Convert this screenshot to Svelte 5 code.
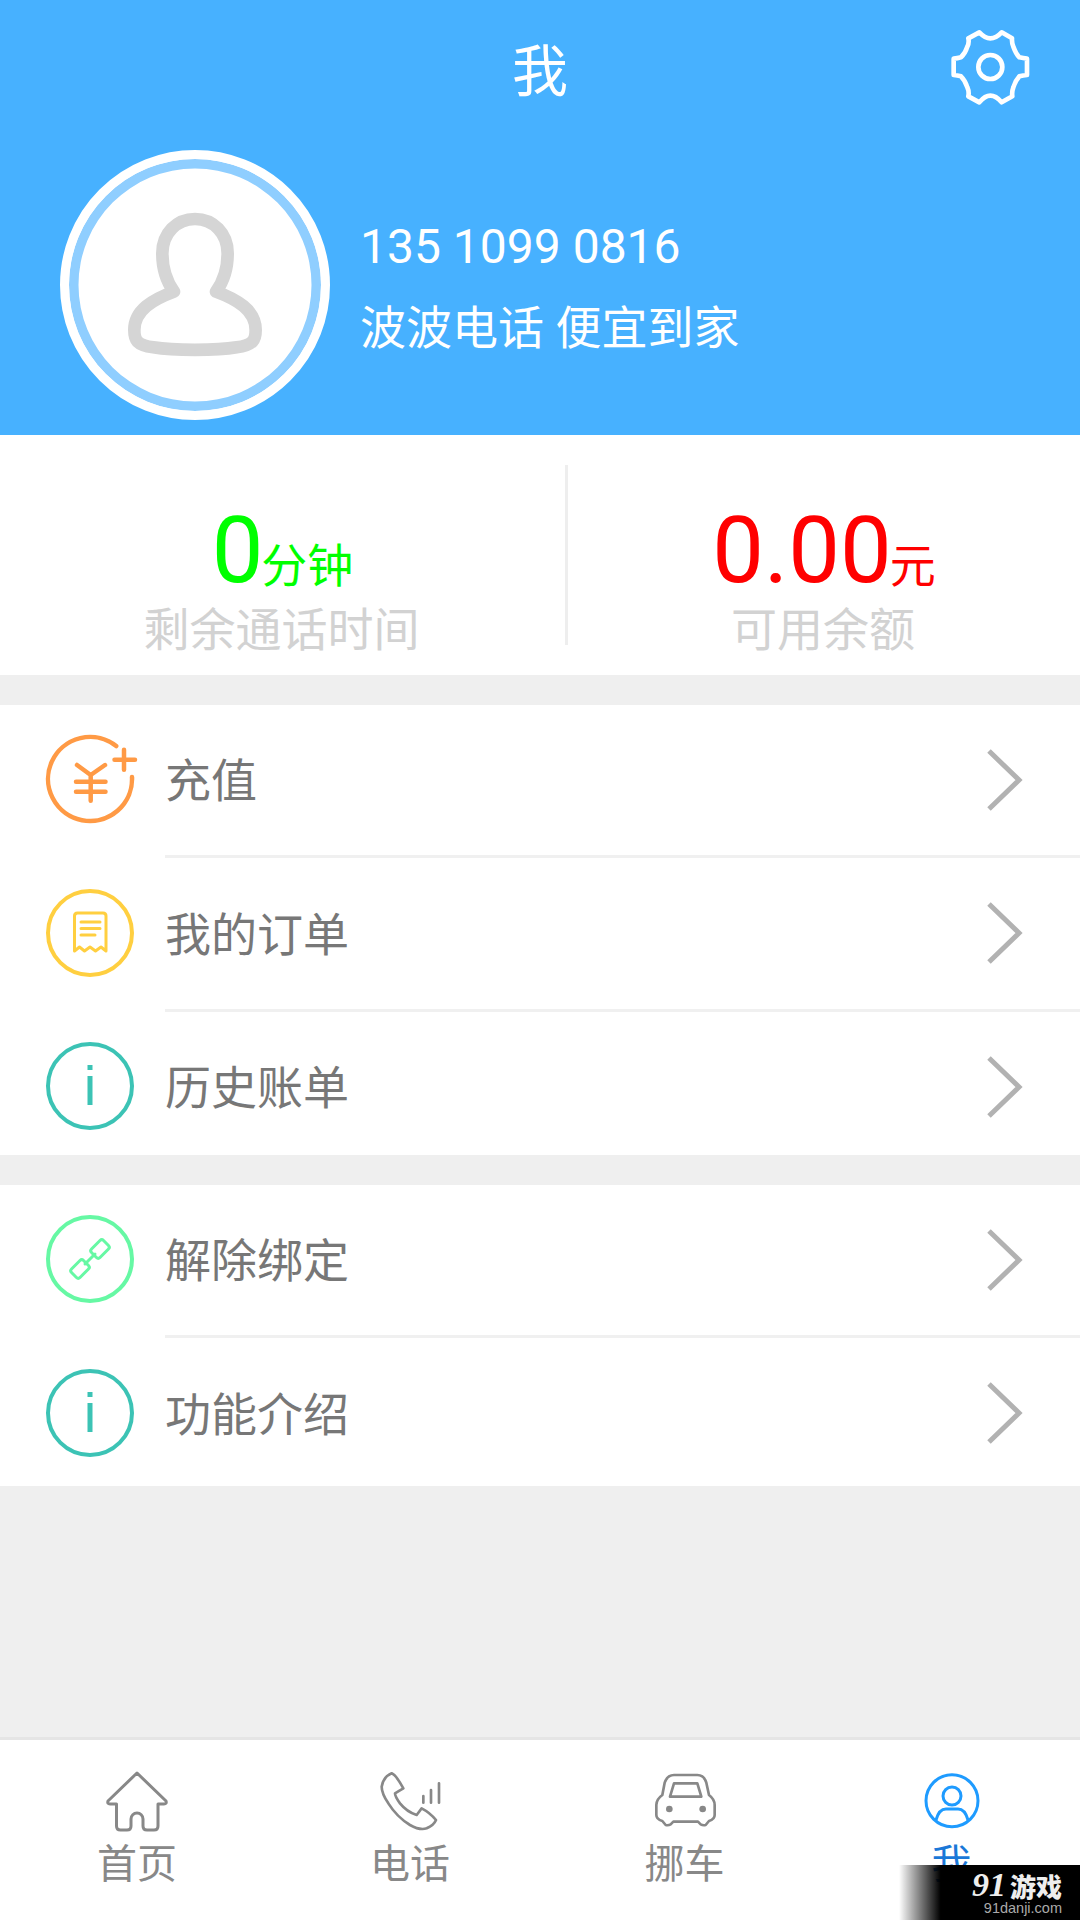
<script>
  const sections = [
    [
      { label: '充值', icon: 'yuan' },
      { label: '我的订单', icon: 'receipt' },
      { label: '历史账单', icon: 'info' }
    ],
    [
      { label: '解除绑定', icon: 'link' },
      { label: '功能介绍', icon: 'info' }
    ]
  ]

  const tabs = [
    { label: '首页', icon: 'home' },
    { label: '电话', icon: 'phone' },
    { label: '挪车', icon: 'car' },
    { label: '我', icon: 'me', active: true }
  ]
</script>

<div class="page">
  <header class="head">
    <div class="bar">
      <span class="side"></span>
      <h1>我</h1>
      <svg class="gear" viewBox="0 0 360 360">
        <path d="M148 67 Q165 85 181 85 Q198 85 215 67 L246 85 Q245 98 250 110 Q258 132 268 142 Q280 145 291 146 V195 Q280 196 268 199 Q256 212 250 232 Q245 245 247 259 L215 277 Q198 257 181 257 Q165 257 148 277 L115 259 Q118 245 112 232 Q106 212 93 199 Q82 196 71 195 V146 Q82 145 93 142 Q106 130 112 110 Q118 98 115 85 Z" />
        <circle cx="181" cy="171" r="36" />
      </svg>
    </div>
    <div class="profile">
      <div class="avatar">
        <svg viewBox="0 0 870 870">
          <path d="M372 455 C350 425 337 385 337 340 C337 280 380 237 435 237 C490 237 533 280 533 340 C533 385 520 425 498 455 C560 478 617 510 617 570 C617 600 610 615 560 622 C500 632 370 632 310 622 C260 615 253 600 253 570 C253 510 310 478 372 455 Z" />
        </svg>
      </div>
      <div class="who">
        <div class="tel">135 1099 0816</div>
        <div class="slogan">波波电话 便宜到家</div>
      </div>
    </div>
  </header>

  <section class="stats">
    <div class="stat left">
      <div class="value green"><b>0</b><span>分钟</span></div>
      <div class="caption">剩余通话时间</div>
    </div>
    <div class="stat right">
      <div class="value red"><b>0.00</b><span>元</span></div>
      <div class="caption">可用余额</div>
    </div>
  </section>

  {#each sections as rows}
    <div class="menu">
      {#each rows as row}
        <div class="row">
          <svg class="icon {row.icon}" viewBox="0 0 88 88">
            {#if row.icon === 'yuan'}
              <path d="M70.2 11.1 A42 42 0 1 0 86 42" />
              <path d="M68.5 24.7 H89 M78 14.7 V34.7" />
              <path d="M31 30 L44.7 40 L59 30 M30 46.7 H59.5 M30 56.7 H59.5 M44.7 40 V65.7" />
            {:else if row.icon === 'receipt'}
              <circle cx="44" cy="44" r="42" />
              <path class="thin" d="M28.5 62 V27 Q28.5 24 31.5 24 H57 Q60 24 60 27 V62 L55 58 L49.5 62 L44 58 L38.5 62 L33.5 58 Z" />
              <path class="thin" d="M35 33 H54 M35 39.5 H54 M35 46 H49" />
            {:else if row.icon === 'info'}
              <circle cx="44" cy="44" r="42" />
              <rect x="41.5" y="23" width="5" height="5" />
              <rect x="41.5" y="34" width="5" height="29" />
            {:else}
              <circle cx="44" cy="44" r="42" />
              <rect class="thin" x="45.5" y="28" width="17" height="12" rx="2.5" transform="rotate(-45 54 34)" />
              <rect class="thin" x="25.5" y="48" width="17" height="12" rx="2.5" transform="rotate(-45 34 54)" />
              <path class="thin" d="M39 49 L49 39" />
            {/if}
          </svg>
          <div class="body">
            <div class="label">{row.label}</div>
            <svg class="chevron" viewBox="0 0 70 100">
              <path d="M20 21 L50 50 L20 79" />
            </svg>
          </div>
        </div>
      {/each}
    </div>
  {/each}

  <div class="spacer"></div>

  <nav class="tabs">
    {#each tabs as tab}
      <div class="tab" class:active={tab.active}>
        {#if tab.icon === 'home'}
          <svg viewBox="-15 -10 100 80">
            <path d="M35 3 L6 31 Q5 34 8 34 H14.5 V56 Q14.5 60 18.5 60 H25 Q29 60 29 56 V49 A6 6 0 0 1 41 49 V56 Q41 60 45 60 H52 Q56 60 56 56 V34 H62 Q65 34 64 31 Z" />
          </svg>
        {:else if tab.icon === 'phone'}
          <svg viewBox="0 0 300 240" class="big">
            <path d="M95 40 Q108 45 130 85 Q118 92 105 100 Q105 110 120 130 Q140 155 170 165 Q178 155 185 145 Q210 158 228 180 Q222 195 200 205 Q180 212 150 195 Q110 170 85 130 Q65 100 65 80 Q70 50 95 40 Z" />
            <path d="M190 108 V128 M213 90 V128 M237 70 V128" />
          </svg>
        {:else if tab.icon === 'car'}
          <svg viewBox="-17 0 300 240" class="big">
            <path d="M100 45 H170 Q190 45 197 68 L205 105 Q222 118 222 135 V165 Q222 178 205 183 L195 195 Q187 197 180 193 L172 185 H98 L90 193 Q83 197 75 195 L65 183 Q47 178 47 165 V135 Q47 118 65 105 L72 68 Q80 45 100 45 Z" />
            <path d="M100 70 H170 L182 110 H88 Z" />
            <circle class="dot" cx="86" cy="147" r="10" />
            <circle class="dot" cx="186" cy="147" r="10" />
          </svg>
        {:else}
          <svg viewBox="0 0 100 80">
            <circle cx="50" cy="40.7" r="26" />
            <circle cx="50" cy="36" r="9" />
            <path d="M34 60 Q37 49 44 49 H56 Q63 49 66 60" />
          </svg>
        {/if}
        <div class="tab-label">{tab.label}</div>
      </div>
    {/each}
  </nav>

  <div class="mark">
    <div class="mark-top"><i>91</i><b>游戏</b></div>
    <div class="mark-url">91danji.com</div>
  </div>
</div>

<style>
  :global(body) {
    margin: 0;
  }
  .page {
    position: relative;
    width: 1080px;
    height: 1920px;
    overflow: hidden;
    display: flex;
    flex-direction: column;
    background: #efefef;
    font-family: Roboto, "Noto Sans CJK SC", sans-serif;
  }

  .head {
    height: 435px;
    background: #47b1ff;
    color: #fff;
  }
  .bar {
    height: 150px;
    display: grid;
    grid-template-columns: 120px 1fr 120px;
    align-items: start;
  }
  .bar h1 {
    margin: 0;
    font-size: 56px;
    font-weight: 400;
    line-height: 145px;
    text-align: center;
  }
  .gear {
    width: 120px;
    height: 120px;
    margin: 10px 0 0 -30px;
    fill: none;
    stroke: #fff;
    stroke-width: 14;
    stroke-linejoin: round;
  }
  .profile {
    display: flex;
    align-items: center;
    padding-left: 60px;
    gap: 30px;
  }
  .avatar {
    width: 270px;
    height: 270px;
    box-sizing: border-box;
    border-radius: 50%;
    background: #fff;
    border: 9px solid #fff;
    box-shadow: inset 0 0 0 9.5px #8fceff;
    flex: none;
  }
  .avatar svg {
    display: block;
    width: 290px;
    height: 290px;
    margin: -19px;
    fill: none;
    stroke: #d5d5d5;
    stroke-width: 38;
    stroke-linejoin: round;
  }
  .who {
    padding-top: 4px;
  }
  .tel {
    font-size: 48px;
    line-height: 60px;
    margin-bottom: 21px;
  }
  .slogan {
    font-size: 46px;
    line-height: 60px;
  }

  .stats {
    height: 240px;
    flex: none;
    display: flex;
    background: #fff;
  }
  .stat {
    height: 180px;
    margin-top: 30px;
    text-align: center;
  }
  .left {
    width: 565px;
    border-right: 3px solid #eee;
    flex: none;
  }
  .right {
    flex: 1;
  }
  .value {
    height: 110px;
    padding-top: 31px;
    font-size: 46px;
    line-height: 110px;
    white-space: nowrap;
  }
  .value b {
    font-size: 92px;
    font-weight: 400;
  }
  .value span {
    margin-left: -2px;
  }
  .green {
    color: #00ff00;
  }
  .red {
    color: #ff0000;
  }
  .caption {
    margin: -6px 0 0 -2px;
    font-size: 46px;
    line-height: 60px;
    color: #d2d2d2;
  }

  .menu {
    margin-top: 30px;
    background: #fff;
    flex: none;
  }
  .row {
    display: flex;
    height: 153.5px;
    padding-left: 46px;
  }
  .row:last-child {
    height: 143px;
  }
  .menu + .menu .row:last-child {
    height: 147px;
  }
  .icon {
    width: 88px;
    height: 88px;
    margin-top: 30px;
    flex: none;
    overflow: visible;
    fill: none;
    stroke-width: 4;
    stroke-linecap: round;
    stroke-linejoin: round;
  }
  .icon .thin {
    stroke-width: 3;
  }
  .yuan {
    stroke: #ff9a45;
    stroke-width: 4.5;
  }
  .receipt {
    stroke: #ffcf40;
  }
  .info {
    stroke: #3cc3b5;
  }
  .info rect {
    fill: #3cc3b5;
    stroke: none;
  }
  .link {
    stroke: #66f8a4;
  }
  .body {
    flex: 1;
    display: flex;
    align-items: flex-start;
    align-self: flex-start;
    height: 153px;
    box-sizing: border-box;
    margin-left: 31px;
    padding: 30px 41px 0 0;
    border-bottom: 3px solid #f0f0f0;
  }
  .row:last-child .body {
    height: auto;
    border-bottom: none;
  }
  .label {
    flex: 1;
    padding-top: 2px;
    font-size: 46px;
    line-height: 88px;
    color: #777;
  }
  .chevron {
    width: 70px;
    height: 100px;
    margin-top: -5.5px;
    flex: none;
    fill: none;
    stroke: #b2b2b2;
    stroke-width: 5;
  }

  .spacer {
    flex: 1;
  }

  .tabs {
    height: 183px;
    flex: none;
    box-sizing: border-box;
    border-top: 3px solid #e5e5e5;
    background: #fff;
    display: grid;
    grid-template-columns: 274px 272px 277px 257px;
    color: #888;
  }
  .tab {
    display: flex;
    flex-direction: column;
    align-items: center;
    padding-top: 20px;
    fill: none;
    stroke: #888;
    stroke-width: 3;
    stroke-linejoin: round;
    stroke-linecap: round;
  }
  .tab svg {
    width: 100px;
    height: 80px;
    flex: none;
  }
  .tab svg.big {
    stroke-width: 8;
  }
  .tab .dot {
    fill: #888;
    stroke: none;
  }
  .tab.active {
    color: #1a78d8;
    stroke: #1e9bff;
  }
  .tab-label {
    font-size: 40px;
    line-height: 50px;
    stroke: none;
  }

  .mark {
    position: absolute;
    right: 0;
    bottom: 0;
    width: 181px;
    height: 55px;
    box-sizing: border-box;
    padding: 5px 18px 0 0;
    background: linear-gradient(90deg, rgba(0, 0, 0, 0), #000 23%);
    display: flex;
    flex-direction: column;
    align-items: flex-end;
    color: #eee;
  }
  .mark-top {
    display: flex;
    align-items: center;
    gap: 4px;
    height: 30px;
    font-size: 26px;
  }
  .mark-top i {
    font-family: "Liberation Serif", serif;
    font-size: 34px;
    font-weight: 700;
    line-height: 30px;
  }
  .mark-top b {
    font-weight: 900;
  }
  .mark-url {
    font-family: "Liberation Sans", sans-serif;
    font-size: 14.5px;
    line-height: 16px;
    color: #aaa;
  }
</style>
